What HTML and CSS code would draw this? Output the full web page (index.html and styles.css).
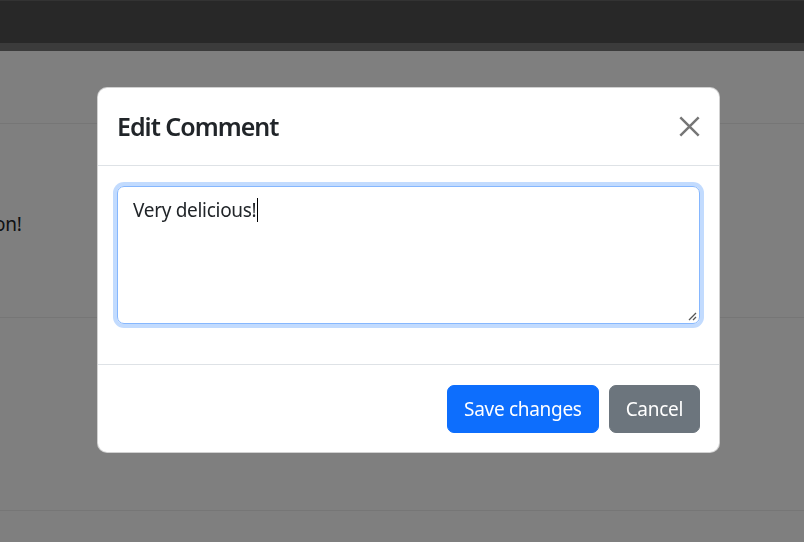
FILE: index.html
```html
<!DOCTYPE html>
<html lang="en">
<head>
<meta charset="utf-8">
<title>Edit Comment</title>
<link rel="stylesheet" href="styles.css">
</head>
<body>
  <div class="page">
    <header class="navbar"></header>
    <div class="subbar"></div>
    <section class="row row-top"></section>
    <section class="row row-comment"><p class="comment-text">on!</p></section>
    <section class="row row-next"></section>
    <section class="row row-last"></section>
  </div>

  <div class="backdrop"></div>

  <div class="modal-wrap">
    <div class="modal">
      <div class="modal-header">
        <h5 class="modal-title">Edit Comment</h5>
        <button class="btn-close" type="button" aria-label="Close">
          <svg viewBox="0 0 16 16" width="21" height="21"><path d="M1 1L15 15M15 1L1 15" stroke="#767676" stroke-width="1.9" fill="none"/></svg>
        </button>
      </div>
      <div class="modal-body">
        <div class="field">
          <div class="textarea">Very delicious!<span class="caret"></span></div>
          <svg class="grip" viewBox="0 0 10 10" width="10" height="10"><path d="M9 2L2 9M9 6L6 9" stroke="#555" stroke-width="1.3" fill="none"/></svg>
        </div>
      </div>
      <div class="modal-footer">
        <button class="btn btn-primary" type="button">Save changes</button>
        <button class="btn btn-secondary" type="button">Cancel</button>
      </div>
    </div>
  </div>
</body>
</html>
```

FILE: styles.css
```css
* { box-sizing: border-box; }

html, body {
  margin: 0;
  padding: 0;
  height: 100%;
}

body {
  font-family: "Noto Sans", "Open Sans", sans-serif;
  font-size: 20px;
  line-height: 1.5;
  color: #212529;
  background: #ffffff;
  overflow: hidden;
}

.page {
  display: flex;
  flex-direction: column;
}

.navbar {
  height: 43px;
  background: #505050;
  border-top: 1px solid #666;
}

.subbar {
  height: 8px;
  background: #767676;
}

.row {
  border-bottom: 1px solid #ececec;
}

.row-top { height: 73px; }
.row-comment {
  height: 194px;
  display: flex;
  align-items: flex-start;
}
.comment-text {
  margin: 86px 0 0 -6px;
  font-size: 19px;
  letter-spacing: -0.3px;
}
.row-next { height: 193px; }
.row-last { height: 40px; border-bottom: none; }

.backdrop {
  position: fixed;
  inset: 0;
  background: rgba(0, 0, 0, 0.5);
}

.modal-wrap {
  position: fixed;
  inset: 0;
  display: flex;
  align-items: center;
  justify-content: center;
  padding-left: 13px;
  padding-bottom: 2px;
}

.modal {
  width: 623px;
  background: #fff;
  border-radius: 10px;
  border: 1px solid rgba(0, 0, 0, 0.18);
  display: flex;
  flex-direction: column;
}

.modal-header {
  display: flex;
  align-items: center;
  justify-content: space-between;
  padding: 20px 19px 20px 19px;
  border-bottom: 1px solid #dee2e6;
}

.modal-title {
  margin: 0;
  font-size: 25px;
  font-weight: 600;
  line-height: 37.5px;
  letter-spacing: -1px;
  color: #212529;
}

.btn-close {
  width: 25px;
  height: 25px;
  padding: 0;
  margin-right: -2px;
  border: 0;
  background: transparent;
  display: flex;
  align-items: center;
  justify-content: center;
}

.modal-body {
  padding: 20px 19px 40px;
}

.field {
  position: relative;
}

.textarea {
  height: 138px;
  padding: 7.5px 15px;
  border: 1px solid #86b7fe;
  border-radius: 7px;
  box-shadow: 0 0 0 4px #c2dbfe;
  font-size: 19px;
  letter-spacing: -0.3px;
  color: #212529;
  line-height: 30px;
}

.caret {
  display: inline-block;
  width: 1px;
  height: 24px;
  background: #000;
  vertical-align: -5px;
  margin-left: 1px;
}

.grip {
  position: absolute;
  right: 3px;
  bottom: 3px;
}

.modal-footer {
  display: flex;
  justify-content: flex-end;
  align-items: center;
  gap: 10px;
  padding: 20px 19px 19px;
  border-top: 1px solid #dee2e6;
}

.btn {
  font-family: inherit;
  font-size: 19px;
  letter-spacing: -0.3px;
  line-height: 30px;
  padding: 8px 16px;
  border-radius: 7px;
  border: 1px solid transparent;
  color: #fff;
}

.btn-primary {
  background: #0d6efd;
  border-color: #0d6efd;
}

.btn-secondary {
  background: #6c757d;
  border-color: #6c757d;
}
```
